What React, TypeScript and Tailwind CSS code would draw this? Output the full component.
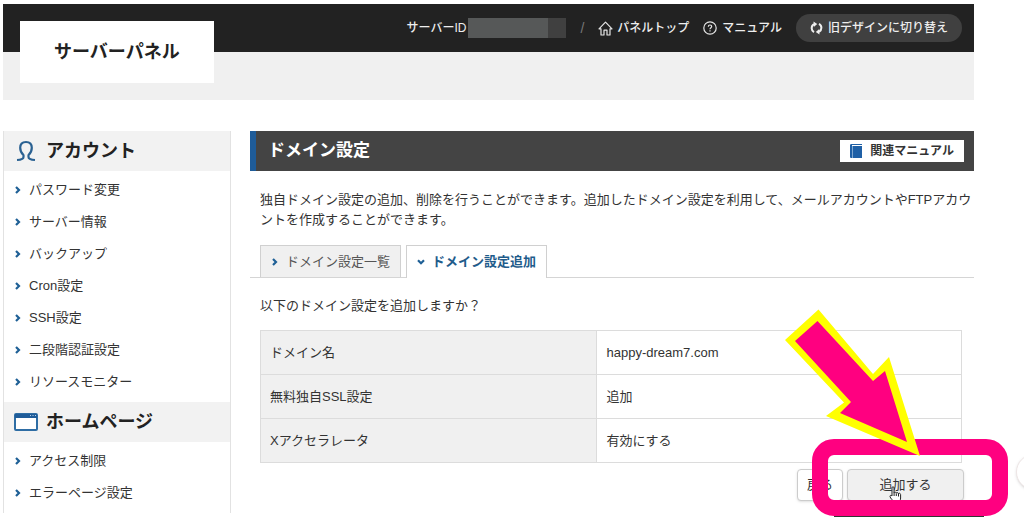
import { ReactNode } from 'react';

interface MenuSection {
  title: string;
  icon: ReactNode;
  items: string[];
}

function AccountIcon() {
  return (
    <svg width="20" height="22" viewBox="0 0 20 22" fill="none" stroke="#2a6192" strokeWidth="2.2" strokeLinejoin="round">
      <path d="M1 20C4.500 19.800 7.500 19 7.500 17V15C5.300 13.200 4.200 11 4.200 7.800C4.200 4.200 6.400 2 10 2C13.600 2 15.800 4.200 15.800 7.800C15.800 11 14.700 13.200 12.500 15V17C12.500 19 15.500 19.800 19 20" />
    </svg>
  );
}

function WindowIcon() {
  return (
    <svg width="24" height="18" viewBox="0 0 24 18">
      <rect x="1" y="1" width="22" height="16" rx="1" fill="#fff" stroke="#2e6da4" strokeWidth="2" />
      <rect x="1" y="1" width="22" height="4" fill="#1f5c99" />
      <path d="M16 2.5h1M18.5 2.5h1M21 2.5h1" stroke="#b9d2e8" />
    </svg>
  );
}

function Chevron({ down = false }: { down?: boolean }) {
  return (
    <svg width="8" height="8" viewBox="0 0 8 8" fill="none" stroke="#1f6096" strokeWidth="2.2" className="shrink-0">
      <path d={down ? 'M1 2.2L4 5.2L7 2.2' : 'M2 1L5 4L2 7'} />
    </svg>
  );
}

function HomeIcon() {
  return (
    <svg width="15" height="15" viewBox="0 0 15 15" fill="none" stroke="#e5e5e5" strokeWidth="1.2" strokeLinejoin="round">
      <path d="M1 7.8L7.5 1.2L14 7.8H12V14H9V9.2H6V14H3V7.8Z" />
    </svg>
  );
}

function HelpIcon() {
  return (
    <svg width="14" height="14" viewBox="0 0 14 14" fill="none" stroke="#e5e5e5" strokeWidth="1.2">
      <circle cx="7" cy="7" r="6.2" />
      <path d="M5.3 5.7C5.3 4.6 6 4 7 4C8 4 8.7 4.6 8.7 5.5C8.7 6.6 7 6.8 7 8.2M7 9.3V10.5" />
    </svg>
  );
}

function SwitchIcon() {
  return (
    <svg width="13" height="14" viewBox="0 0 13 14">
      <path
        d="M4 11.2C1 9.500 .8 5 4 3.200M9 2.800C12.200 4.500 12.200 9 9 10.800"
        fill="none"
        stroke="#eee"
        strokeWidth="2"
      />
      <path d="M3.500 .5L7.200 3L3.800 6ZM9.500 13.500L5.800 11L9.200 8Z" fill="#eee" />
    </svg>
  );
}

function BookIcon() {
  return (
    <svg width="12" height="14" viewBox="0 0 12 14">
      <path d="M0 1.500C0 .5 .5 0 1.500 0H12V1H2V2H12V14H1.500C.5 14 0 13.500 0 12.500Z" fill="#1f60a6" />
      <path d="M2.5 2V14" stroke="#a9c6e2" strokeWidth=".7" />
    </svg>
  );
}

function Cursor() {
  return (
    <svg width="14" height="17" viewBox="0 0 14 17" fill="#fff" stroke="#222" strokeWidth="1">
      <path d="M3 10V1.8C3 .4 5 .4 5 1.8V7C5 5.8 7.2 5.8 7.2 7.2C7.2 6.2 9.4 6.2 9.4 7.8C9.4 6.9 11.6 7 11.6 8.6V12C11.6 14 10.8 14.5 10.8 16.5H5C5 14.7 1 12.5 1 10.4C1 9.2 2.2 9 3 10Z" />
      <path d="M5.1 7V10M7.3 7.5V10M9.5 8V10.5" />
    </svg>
  );
}

const sections: MenuSection[] = [
  {
    title: 'アカウント',
    icon: <AccountIcon />,
    items: ['パスワード変更', 'サーバー情報', 'バックアップ', 'Cron設定', 'SSH設定', '二段階認証設定', 'リソースモニター'],
  },
  {
    title: 'ホームページ',
    icon: <WindowIcon />,
    items: ['アクセス制限', 'エラーページ設定'],
  },
];

const rows = [
  { label: 'ドメイン名', value: 'happy-dream7.com' },
  { label: '無料独自SSL設定', value: '追加' },
  { label: 'Xアクセラレータ', value: '有効にする' },
];

function Header() {
  return (
    <header className="relative bg-[#f0f0f0] pb-12">
      <div className="flex h-12 items-center justify-end bg-[#222] pr-3 text-xs font-medium text-[#eee]">
        <span>サーバーID</span>
        <span className="ml-[2px] flex h-5">
          <span className="w-20 bg-[#565858]" />
          <span className="w-[18px] bg-[#404040]" />
        </span>
        <span className="mx-[14px] text-sm text-[#777]">/</span>
        <a href="#" className="flex items-center gap-1">
          <HomeIcon />
          パネルトップ
        </a>
        <a href="#" className="ml-[14px] flex items-center gap-[5px]">
          <HelpIcon />
          マニュアル
        </a>
        <button type="button" className="ml-[14px] flex h-7 items-center gap-[5px] rounded-full bg-[#404040] px-[14px]">
          <SwitchIcon />
          旧デザインに切り替え
        </button>
      </div>
      <h1 className="absolute left-[17px] top-[17px] bg-white px-[34px] py-[17px] text-lg leading-7 font-bold text-[#222]">
        サーバーパネル
      </h1>
    </header>
  );
}

function Sidebar() {
  return (
    <nav className="w-[228px] shrink-0 self-start border-x border-[#e2e2e2]">
      {sections.map(section => (
        <section key={section.title}>
          <h2 className="flex h-10 items-center bg-[#f2f2f2] pl-[9px] text-lg font-bold text-[#222]">
            <span className="mr-[7px] flex w-[26px] justify-center">{section.icon}</span>
            {section.title}
          </h2>
          <ul className="pt-[3px] pb-1">
            {section.items.map(item => (
              <li key={item}>
                <a href="#" className="flex h-8 items-center gap-[7px] pl-[10px]">
                  <Chevron />
                  {item}
                </a>
              </li>
            ))}
          </ul>
        </section>
      ))}
    </nav>
  );
}

// Pink frame and arrow that point at the add button
function Callout() {
  return (
    <div className="pointer-events-none absolute -top-[30px] -right-[34px]">
      <div className="h-[77px] w-[196px] rounded-[22px] border-[16px] border-[#ff0080]" />
      <div className="absolute top-[77px] left-[22px] h-px w-[150px] bg-[#333]" />
      <svg width="140" height="152" viewBox="0 0 140 152" className="absolute -top-[132px] -left-[30px]">
        <path d="M36.500 2.500L91 67L107 50L138 149L44 109L62 95.500L3 33Z" fill="#ffff00" />
        <path d="M35.500 14L91 74L103 64L125 135L58 106L69 95L13 34Z" fill="#ff0080" />
      </svg>
    </div>
  );
}

function DomainSettings() {
  return (
    <main className="min-w-0 flex-1">
      <div className="flex h-10 items-center justify-between border-l-[6px] border-[#1f5c99] bg-[#444] pr-[10px] pl-3">
        <h2 className="text-[17px] font-bold text-white">ドメイン設定</h2>
        <a href="#" className="flex h-[22px] items-center gap-2 bg-white px-[10px] text-xs font-bold">
          <BookIcon />
          関連マニュアル
        </a>
      </div>
      <p className="mt-[19px] pl-[10px] leading-5 whitespace-nowrap">
        独自ドメイン設定の追加、削除を行うことができます。追加したドメイン設定を利用して、メールアカウントやFTPアカウ
        <br />
        ントを作成することができます。
      </p>
      <div className="mt-[15px] flex gap-[5px] border-b border-[#d5d5d5] pl-[10px]">
        <button type="button" className="flex h-8 items-center gap-[7px] border border-b-0 border-[#d0d0d0] bg-[#f0f0f0] px-[10px] text-[#555]">
          <Chevron />
          ドメイン設定一覧
        </button>
        <button type="button" className="-mb-px flex h-[33px] items-center gap-[7px] border border-b-0 border-[#d0d0d0] bg-white px-[10px] font-bold text-[#1f5c8b]">
          <Chevron down />
          ドメイン設定追加
        </button>
      </div>
      <p className="mt-[18px] pl-[10px] leading-5">以下のドメイン設定を追加しますか？</p>
      <div className="mt-[14px] pr-3 pl-[10px]">
        <table className="w-full border-collapse">
          <tbody>
            {rows.map(row => (
              <tr key={row.label} className="h-11">
                <th scope="row" className="w-[48%] border border-[#dcdcdc] bg-[#f0f0f0] px-[9px] text-left font-normal">
                  {row.label}
                </th>
                <td className="border border-[#dcdcdc] px-[9px]">{row.value}</td>
              </tr>
            ))}
          </tbody>
        </table>
      </div>
      <div className="relative mt-[6px] flex justify-end gap-1 pr-[10px]">
        <button type="button" className="h-8 w-[46px] rounded-sm border border-[#ccc] bg-white shadow-sm">戻る</button>
        <button type="button" className="relative h-8 w-[117px] rounded-sm border border-[#ccc] bg-[#f0f0f0] shadow-sm">
          追加する
          <span className="absolute top-4 left-[41px]">
            <Cursor />
          </span>
        </button>
        <Callout />
      </div>
    </main>
  );
}

export default function App() {
  return (
    <div className="relative min-h-screen overflow-hidden bg-white pt-1 pr-[50px] pl-[3px] font-['Liberation_Sans','Noto_Sans_CJK_JP',sans-serif] text-[13px] text-[#333]">
      <Header />
      <div className="mt-[31px] flex gap-[19px]">
        <Sidebar />
        <DomainSettings />
      </div>
      <div className="absolute top-[454px] -right-[28px] size-9 rounded-full border border-[#eee6e6] bg-white shadow-sm" />
    </div>
  );
}
